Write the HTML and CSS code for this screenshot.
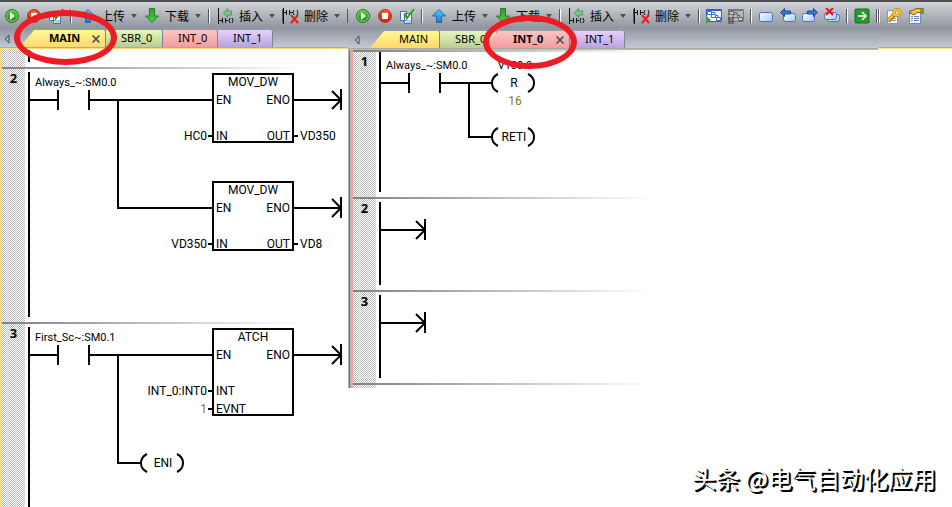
FILE: index.html
```html
<!DOCTYPE html>
<html lang="zh-CN">

	<head>
		<meta charset="UTF-8">
		<title>梯形图</title>
		<link rel="stylesheet" href="styles.css">
	</head>

	<body>
		<svg class="defs" aria-hidden="true">
			<defs>
				<radialGradient id="g-green" cx="50%" cy="35%">
					<stop offset="0" stop-color="#5ed33c" />
					<stop offset="1" stop-color="#1c8a1c" />
				</radialGradient>
				<radialGradient id="g-red" cx="50%" cy="35%">
					<stop offset="0" stop-color="#ff8a50" />
					<stop offset="1" stop-color="#cf2a08" />
				</radialGradient>
				<linearGradient id="g-blue" x2="0" y2="1">
					<stop offset="0" stop-color="#5cc8ff" />
					<stop offset="1" stop-color="#1878d8" />
				</linearGradient>
				<linearGradient id="g-down" x2="0" y2="1">
					<stop offset="0" stop-color="#2c9c2c" />
					<stop offset="1" stop-color="#4fd03c" />
				</linearGradient>
				<linearGradient id="g-page" x2="1" y2="1">
					<stop offset="0" stop-color="#fff" />
					<stop offset="1" stop-color="#a9c6fa" />
				</linearGradient>
				<symbol id="i-run" viewBox="0 0 16 16">
					<circle cx="8" cy="8" r="6.5" fill="url(#g-green)" stroke="#1d7a1d" />
					<circle cx="8" cy="8" r="5.4" fill="none" stroke="#8fe070" />
					<path d="M6 4l5 4-5 4z" fill="#fff" />
				</symbol>
				<symbol id="i-stop" viewBox="0 0 16 16">
					<circle cx="8" cy="8" r="6.5" fill="url(#g-red)" stroke="#c43a18" />
					<path d="M5 5h6v6H5z" fill="#fff" />
				</symbol>
				<symbol id="i-compile" viewBox="0 0 16 16">
					<path d="M1.500 3.500h6v9h-6zM5.500 5.500h7v10h-7z" fill="#fff" stroke="#5070a8" />
					<path d="M7 12h5v3H7z" fill="#b8ccec" />
					<path d="M5 6l3 4 7-9" fill="none" stroke="#18a818" stroke-width="2" />
				</symbol>
				<symbol id="i-up" viewBox="0 0 16 16">
					<path d="M8 1.500l6.500 6.500h-4v6.500h-5V8h-4z" fill="url(#g-blue)" stroke="#1c68b8" />
				</symbol>
				<symbol id="i-down" viewBox="0 0 16 16">
					<path d="M8 14.500l6.500-6.500h-4V.5h-5V8h-4z" fill="url(#g-down)" stroke="#258025" />
				</symbol>
				<symbol id="i-insert" viewBox="0 0 16 16">
					<path d="M.5 0v16M1 12.500h3M4.500 10v5M7.500 10v5M8 12.500h2M12 10q-2 2.500 0 5M14 10q2 2.500 0 5" fill="none" stroke="#111" />
					<path d="M5.500 5l4-4.500v2.500h4v4h-4v2.500z" fill="#7cc48c" stroke="#4e9c60" />
				</symbol>
				<symbol id="i-delete" viewBox="0 0 16 16">
					<path d="M.5 0v16M1 4.500h2M3.500 2v5M6.500 2v5M7 4.500h3M11 2q-2 2.500 0 5M14 2q2 2.500 0 5" fill="none" stroke="#111" />
					<path d="M8 7l7 8M15 7l-7 8" stroke="#f01818" stroke-width="2" />
				</symbol>
				<symbol id="i-status" viewBox="0 0 16 16">
					<path d="M.5 1.500h15v12H.5z" fill="#eef5ff" stroke="#2c60c8" />
					<path d="M1 2h14" stroke="#2c60c8" stroke-width="2" />
					<path d="M1.500 3.500h4v3h-4zM5.500 6.500h4v3h-4zM10.500 9.500h4v3h-4zM6 4.500h3v2M10 7.500h2v2" fill="#fff" stroke="#4070c8" />
					<path d="M0 8l5 4-5 4z" fill="#38a038" />
				</symbol>
				<symbol id="i-pause" viewBox="0 0 16 16">
					<path d="M.5 1.500h15v12H.5z" fill="#b4b6ba" stroke="#777" />
					<path d="M1 2h14" stroke="#777" stroke-width="2" />
					<path d="M1.500 3.500h4v3h-4zM5.500 6.500h4v3h-4zM10.500 9.500h4v3h-4zM6 4.500h3v2M10 7.500h2v2" fill="#ccc" stroke="#666" />
					<path d="M1.500 9v7M4.500 9v7" stroke="#555" stroke-width="2" />
				</symbol>
				<symbol id="i-mark" viewBox="0 0 16 16">
					<rect x="1.500" y="4.500" width="13" height="9" rx="2" fill="url(#g-page)" stroke="#3c70d0" />
				</symbol>
				<symbol id="i-prev" viewBox="0 0 16 16">
					<rect x="3.500" y="5.500" width="12" height="8" rx="2" fill="url(#g-page)" stroke="#3c70d0" />
					<path d="M.5 4.500l4-4v2.500h6v3h-6v2.500z" fill="#3878d0" stroke="#1c4c98" />
				</symbol>
				<symbol id="i-next" viewBox="0 0 16 16">
					<rect x=".5" y="5.500" width="12" height="8" rx="2" fill="url(#g-page)" stroke="#3c70d0" />
					<path d="M15.500 4.500l-4-4v2.500h-6v3h6v2.500z" fill="#3878d0" stroke="#1c4c98" />
				</symbol>
				<symbol id="i-clear" viewBox="0 0 16 16">
					<rect x="3.500" y="6.500" width="12" height="7" rx="2" fill="url(#g-page)" stroke="#3c70d0" />
					<rect x=".5" y="4.500" width="12" height="7" rx="2" fill="url(#g-page)" stroke="#3c70d0" />
					<path d="M2 0l7 7M9 0L2 7" stroke="#f01010" stroke-width="2" />
				</symbol>
				<symbol id="i-goto" viewBox="0 0 16 16">
					<rect x="1" y="1" width="14" height="14" rx="1" fill="#259a2b" stroke="#167018" />
					<path d="M4 8h7M8 4l4 4-4 4" fill="none" stroke="#fff" stroke-width="1.500" />
				</symbol>
				<symbol id="i-key" viewBox="0 0 16 16">
					<path d="M1.500 2.500h10v13h-10z" fill="#f3f7ff" stroke="#8898b8" />
					<path d="M5 10.500h5M5 12.500h5" stroke="#8898b8" />
					<path d="M2 13l7-7" stroke="#a86c08" stroke-width="4" />
					<path d="M2 12.500l7-7" stroke="#ffc428" stroke-width="2" />
					<circle cx="11" cy="4.500" r="3" fill="#dfe4ee" stroke="#a86c08" stroke-width="3" />
					<circle cx="11" cy="4.500" r="3" fill="none" stroke="#ffc428" stroke-width="2" />
				</symbol>
				<symbol id="i-props" viewBox="0 0 16 16">
					<path d="M1.500 2.500h11v13h-11z" fill="#f3f7ff" stroke="#7888a8" />
					<path d="M3 8.500h2M6 8.500h5M3 10.500h2M6 10.500h5M3 12.500h2M6 12.500h5" stroke="#6888b8" />
					<path d="M1 5l4-3 4-1.500h4v4H9L6 7 4 6z" fill="#f2c24a" stroke="#806018" />
					<path d="M13 0h3v6h-3z" fill="#58a048" />
				</symbol>
				<symbol id="i-drop" viewBox="0 0 6 4">
					<path d="M0 0h6L3 4z" fill="#4c5058" />
				</symbol>
				<symbol id="i-left" viewBox="0 0 6 10">
					<path d="M5 1v8L1 5z" fill="none" stroke="#444a54" />
				</symbol>
				<symbol id="i-close" viewBox="0 0 8 8">
					<path d="M.5.5l7 7M7.500.5l-7 7" stroke="#444" stroke-width="1.500" />
				</symbol>

				<!-- ladder parts, the rung line runs at y = 33 -->
				<g id="contact">
					<path d="M5 33h28M64 33h29M33 23v20M64 23v20" />
				</g>
				<g id="end">
					<path d="M0 0v21M-9 2l9 9-9 9" />
				</g>
				<g id="coil">
					<path d="M7-9Q1-6 1 0T7 9M37-9q6 3 6 9t-6 9" />
				</g>
			</defs>
		</svg>

		<main class="workspace">
			<section class="pane pane-main">
				<header class="head">
					<div class="toolbar">
						<button aria-label="运行"><svg class="icon"><use href="#i-run" /></svg></button>
						<button aria-label="停止"><svg class="icon"><use href="#i-stop" /></svg></button>
						<button aria-label="编译"><svg class="icon"><use href="#i-compile" /></svg></button>
						<i class="sep"></i>
						<button class="menu"><svg class="icon"><use href="#i-up" /></svg><span>上传</span><svg class="drop"><use href="#i-drop" /></svg></button>
						<button class="menu"><svg class="icon"><use href="#i-down" /></svg><span>下载</span><svg class="drop"><use href="#i-drop" /></svg></button>
						<i class="sep"></i>
						<button class="menu"><svg class="icon"><use href="#i-insert" /></svg><span>插入</span><svg class="drop"><use href="#i-drop" /></svg></button>
						<i class="sep tight"></i>
						<button class="menu"><svg class="icon"><use href="#i-delete" /></svg><span>删除</span><svg class="drop"><use href="#i-drop" /></svg></button>
						<i class="sep"></i>
					</div>
					<nav class="tabs">
						<button class="scroll" aria-label="向左"><svg><use href="#i-left" /></svg></button>
						<div class="tab yellow slant active">
							<button>MAIN</button>
							<button class="close" aria-label="关闭"><svg><use href="#i-close" /></svg></button>
						</div>
						<div class="tab green"><button>SBR_0</button></div>
						<div class="tab pink"><button>INT_0</button></div>
						<div class="tab purple"><button>INT_1</button></div>
					</nav>
					<span class="ring ring-main"></span>
				</header>
				<div class="sheet">
					<article class="network cut">
						<div class="gutter"></div>
						<div class="rail"></div>
					</article>
					<article class="network">
						<div class="gutter">2</div>
						<div class="rail"></div>
						<svg class="ladder" width="323" height="255">
							<use href="#contact" />
							<path d="M93 33h95M93 32v109h95M188 7h80v68h-80zM188 115h80v68h-80zM268 33h47M268 141h47M183 69h5M268 69h5M183 177h5M268 177h5" />
							<use href="#end" x="316" y="22" />
							<use href="#end" x="316" y="130" />
							<text class="symbol" x="10" y="19">Always_~:SM0.0</text>
							<text class="mid" x="228" y="19">MOV_DW</text>
							<text x="191" y="37">EN</text>
							<text class="right" x="265" y="37">ENO</text>
							<text x="191" y="73">IN</text>
							<text class="right" x="265" y="73">OUT</text>
							<text class="right" x="182" y="73">HC0</text>
							<text x="275" y="73">VD350</text>
							<text class="mid" x="228" y="127">MOV_DW</text>
							<text x="191" y="145">EN</text>
							<text class="right" x="265" y="145">ENO</text>
							<text x="191" y="181">IN</text>
							<text class="right" x="265" y="181">OUT</text>
							<text class="right" x="182" y="181">VD350</text>
							<text x="275" y="181">VD8</text>
						</svg>
					</article>
					<article class="network last">
						<div class="gutter">3</div>
						<div class="rail"></div>
						<svg class="ladder" width="323" height="180">
							<use href="#contact" />
							<path d="M93 33h95M93 32v109h23M188 7h80v86h-80zM268 33h47M183 69h5M183 87h5" />
							<use href="#end" x="316" y="22" />
							<use href="#coil" x="115" y="141" />
							<text class="symbol" x="10" y="19">First_Sc~:SM0.1</text>
							<text class="mid" x="228" y="19">ATCH</text>
							<text x="191" y="37">EN</text>
							<text class="right" x="265" y="37">ENO</text>
							<text x="191" y="73">INT</text>
							<text x="191" y="91">EVNT</text>
							<text class="right" x="182" y="73">INT_0:INT0</text>
							<text class="right const" x="182" y="91">1</text>
							<text class="mid" x="138" y="145">ENI</text>
						</svg>
					</article>
				</div>
			</section>

			<section class="pane pane-int">
				<div class="headrow">
					<header class="head front">
						<div class="toolbar">
							<button aria-label="运行"><svg class="icon"><use href="#i-run" /></svg></button>
							<button aria-label="停止"><svg class="icon"><use href="#i-stop" /></svg></button>
							<button aria-label="编译"><svg class="icon"><use href="#i-compile" /></svg></button>
							<i class="sep"></i>
							<button class="menu"><svg class="icon"><use href="#i-up" /></svg><span>上传</span><svg class="drop"><use href="#i-drop" /></svg></button>
							<button class="menu"><svg class="icon"><use href="#i-down" /></svg><span>下载</span><svg class="drop"><use href="#i-drop" /></svg></button>
							<i class="sep"></i>
							<button class="menu"><svg class="icon"><use href="#i-insert" /></svg><span>插入</span><svg class="drop"><use href="#i-drop" /></svg></button>
							<i class="sep tight"></i>
							<button class="menu"><svg class="icon"><use href="#i-delete" /></svg><span>删除</span><svg class="drop"><use href="#i-drop" /></svg></button>
							<i class="sep flush"></i>
							<button aria-label="程序状态"><svg class="icon"><use href="#i-status" /></svg></button>
							<button aria-label="暂停状态"><svg class="icon"><use href="#i-pause" /></svg></button>
							<i class="sep flush"></i>
							<button aria-label="书签"><svg class="icon"><use href="#i-mark" /></svg></button>
							<button aria-label="上一个书签"><svg class="icon"><use href="#i-prev" /></svg></button>
							<button aria-label="下一个书签"><svg class="icon"><use href="#i-next" /></svg></button>
							<button aria-label="清除书签"><svg class="icon"><use href="#i-clear" /></svg></button>
							<i class="sep flush"></i>
							<button aria-label="转到"><svg class="icon"><use href="#i-goto" /></svg></button>
							<i class="sep flush"></i>
						</div>
						<nav class="tabs">
							<button class="scroll" aria-label="向左"><svg><use href="#i-left" /></svg></button>
							<div class="tab yellow slant"><button>MAIN</button></div>
							<div class="tab green"><button>SBR_0</button></div>
							<div class="tab pink slant active over">
								<button>INT_0</button>
								<button class="close" aria-label="关闭"><svg><use href="#i-close" /></svg></button>
							</div>
							<div class="tab purple"><button>INT_1</button></div>
						</nav>
						<span class="ring ring-int"></span>
					</header>
					<header class="head back">
						<div class="toolbar">
							<i class="sep flush"></i>
							<button aria-label="密码"><svg class="icon"><use href="#i-key" /></svg></button>
							<button aria-label="属性"><svg class="icon"><use href="#i-props" /></svg></button>
						</div>
					</header>
				</div>
				<div class="sheet">
					<article class="network n1">
						<div class="gutter">1</div>
						<div class="rail"></div>
						<svg class="ladder" width="280" height="147">
							<use href="#contact" />
							<path d="M93 33h23M93 32v55h23" />
							<use href="#coil" x="115" y="33" />
							<use href="#coil" x="115" y="87" />
							<text class="symbol" x="10" y="19">Always_~:SM0.0</text>
							<text class="mid symbol" x="139" y="19">V100.0</text>
							<text class="mid" x="138" y="37">R</text>
							<text class="mid const" x="139" y="55">16</text>
							<text class="mid" x="138" y="91">RETI</text>
						</svg>
					</article>
					<article class="network">
						<div class="gutter">2</div>
						<div class="rail"></div>
						<svg class="ladder" width="280" height="93">
							<path d="M5 33h43" />
							<use href="#end" x="49" y="22" />
						</svg>
					</article>
					<article class="network">
						<div class="gutter">3</div>
						<div class="rail"></div>
						<svg class="ladder" width="280" height="93">
							<path d="M5 33h43" />
							<use href="#end" x="49" y="22" />
						</svg>
					</article>
					<article class="network stub">
						<div class="gutter"></div>
					</article>
				</div>
			</section>
			<p class="credit">头条 @电气自动化应用</p>
		</main>
	</body>

</html>
```
FILE: styles.css
```css
* {
	margin: 0;
	padding: 0;
	box-sizing: border-box;
}

body {
	background: #fff;
	color: #000;
	font: 12px/16px "Noto Sans", "Noto Sans CJK SC", sans-serif;
}

button {
	display: flex;
	align-items: center;
	border: 0;
	background: none;
	color: inherit;
	font: inherit;
}

svg {
	display: block;
}

.defs {
	position: absolute;
	width: 0;
	height: 0;
}

.workspace {
	position: relative;
	display: flex;
	height: 100vh;
	overflow: hidden;
}

.pane {
	display: flex;
	flex-direction: column;
}

.pane-main {
	flex: 0 0 348px;
}

.pane-int {
	flex: 1;
	min-width: 0;
}

/* header */
.head {
	position: relative;
	flex: none;
	height: 49px;
	border-top: 2px solid #505050;
	border-bottom: 1px solid #ffe680;
	background: linear-gradient(#d2d4d8, #c3c6cb 6px, #90969f 26px, #9aa1ab 30px, #c5c9d1 45px, #aaa 45px);
}

.pane-main .head {
	border-bottom-color: #ffda75;
}

.headrow {
	display: flex;
	align-items: flex-start;
}

.front {
	flex: none;
	width: 530px;
	height: 50px;
	border-bottom-color: #f4a0a0;
	background: linear-gradient(#d2d4d8, #c3c6cb 6px, #90969f 26px, #9aa1ab 30px, #c5c9d1 46px, #aaa 46px);
}

.back {
	flex: 1;
}

.toolbar {
	display: flex;
	align-items: center;
	gap: 6px;
	height: 27px;
	padding-left: 4px;
}

.toolbar > * {
	flex: none;
}

.front .toolbar {
	height: 28px;
	padding-left: 7px;
}

.back .toolbar {
	padding-left: 0;
}

.icon {
	width: 16px;
	height: 16px;
}

.drop {
	width: 6px;
	height: 4px;
	margin-left: 6px;
}

.menu {
	margin-right: 1px;
}

.menu span {
	margin-left: 5px;
	font-family: "Noto Sans CJK SC", sans-serif;
}

.sep {
	width: 2px;
	height: 14px;
	margin-right: 2px;
	border-left: 1px solid #50545c;
	border-right: 1px solid #fff;
}

.sep.flush {
	margin-right: 0;
}

.sep.tight {
	margin-right: -7px;
}

/* tabs */
.tabs {
	display: flex;
	height: 18px;
	padding: 1px 0 0 4px;
	font-size: 11px;
}

.front .tabs {
	padding-left: 6px;
}

.scroll {
	width: 16px;
}

.scroll svg {
	width: 6px;
	height: 10px;
}

.tab {
	display: flex;
	align-items: center;
	width: 55px;
	padding: 0 0 2px 15px;
	border-right: 1px solid #80848c;
	border-radius: 0 2px 0 0;
}

.green {
	width: 57px;
	background: linear-gradient(#e6f8b8, #b8cc96);
}

.yellow {
	background: linear-gradient(#fffa90, #ffd870);
}

.pink {
	background: linear-gradient(#ffc4c4, #f09c9c);
}

.purple {
	background: linear-gradient(#e6d0ff, #b8a4dc);
}

.slant {
	width: 70px;
	padding-left: 29px;
	clip-path: polygon(14px 0, 100% 0, 100% 100%, 0 100%);
}

.slant.active {
	width: 86px;
	font-weight: bold;
}

.slant.over {
	margin-left: -13px;
}

.close {
	margin: 2px 5px 0 auto;
}

.close svg {
	width: 8px;
	height: 8px;
}

/* red marks round the open tabs */
.ring {
	position: absolute;
	z-index: 2;
	border: 6px solid #ed1c24;
	border-radius: 50%;
	pointer-events: none;
}

.ring-main {
	left: 14px;
	top: 8px;
	width: 103px;
	height: 55px;
}

.ring-int {
	left: 135px;
	top: 13px;
	width: 94px;
	height: 54px;
}

/* ladder sheets */
.sheet {
	border-left: 2px solid #ffda75;
}

.pane-main .sheet {
	display: flex;
	flex: 1;
	flex-direction: column;
}

.pane-int .sheet {
	border-left: 2px solid #f4a0a4;
	box-shadow: -1px 0 #b4b4b4, -2px 0 #707070, -3px 0 #b4b4b4;
	margin-left: 3px;
}

.network {
	display: flex;
	background: linear-gradient(90deg, #808080, #fff 300px) no-repeat 0 0 / 300px 2px;
}

.gutter {
	width: 23px;
	margin-top: 2px;
	padding-top: 1px;
	background: repeating-conic-gradient(#bcbcbc 0 25%, #fff 0 50%) 0 0 / 2px 2px;
	font-size: 13px;
	font-weight: bold;
	text-align: center;
}

.rail {
	width: 2px;
	margin: 5px 0 5px 3px;
	background: #000;
}

.ladder {
	margin-left: -5px;
	fill: none;
	stroke: #000;
	stroke-width: 2px;
}

.ladder text {
	fill: #000;
	stroke: none;
	font: 12px Roboto, sans-serif;
}

.ladder .symbol {
	font-size: 11px;
}

.ladder .mid {
	text-anchor: middle;
}

.ladder .right {
	text-anchor: end;
}

.ladder .const {
	fill: #808000;
}

.cut {
	height: 18px;
	background: none;
}

.cut .gutter {
	margin-top: 0;
}

.cut .rail {
	margin-top: 1px;
}

.last {
	flex: 1;
}

.last .rail {
	margin-bottom: 0;
}

.n1 .rail {
	margin-top: 2px;
}

.stub {
	height: 5px;
}

/* white lettering that only its shadow lifts off the page */
.credit {
	position: absolute;
	right: 16px;
	bottom: 12px;
	color: #fff;
	font: 24px/34px "Noto Sans CJK SC", sans-serif;
	text-shadow: 1px 1px #000, 2px 2px #000;
}
```
